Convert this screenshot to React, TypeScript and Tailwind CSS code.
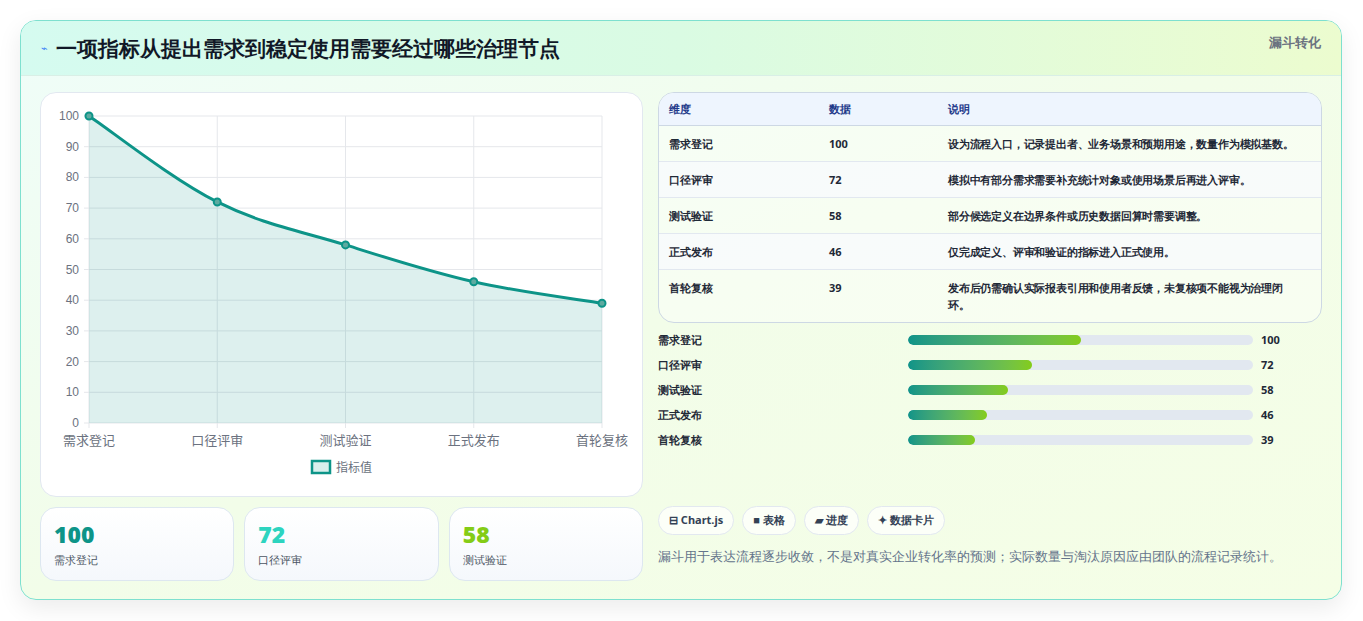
import React from "react";

const rows = [
  { name: "需求登记", v: 100, note: "设为流程入口，记录提出者、业务场景和预期用途，数量作为模拟基数。" },
  { name: "口径评审", v: 72, note: "模拟中有部分需求需要补充统计对象或使用场景后再进入评审。" },
  { name: "测试验证", v: 58, note: "部分候选定义在边界条件或历史数据回算时需要调整。" },
  { name: "正式发布", v: 46, note: "仅完成定义、评审和验证的指标进入正式使用。" },
  { name: "首轮复核", v: 39, note: "发布后仍需确认实际报表引用和使用者反馈，未复核项不能视为治理闭环。" },
];

const X0 = 48, X1 = 561, Y0 = 23, Y1 = 330;
const px = (i: number) => X0 + (i * (X1 - X0)) / 4;
const py = (v: number) => Y1 - (v / 100) * (Y1 - Y0);

function linePath() {
  const pts = rows.map((r, i) => [px(i), py(r.v)]);
  let d = `M${pts[0][0]},${pts[0][1]}`;
  const t = 0.35;
  for (let i = 0; i < pts.length - 1; i++) {
    const p0 = pts[i - 1] || pts[i];
    const p1 = pts[i];
    const p2 = pts[i + 1];
    const p3 = pts[i + 2] || p2;
    const c1 = [p1[0] + ((p2[0] - p0[0]) * t) / 2, p1[1] + ((p2[1] - p0[1]) * t) / 2];
    const c2 = [p2[0] - ((p3[0] - p1[0]) * t) / 2, p2[1] - ((p3[1] - p1[1]) * t) / 2];
    d += ` C${c1[0]},${c1[1]} ${c2[0]},${c2[1]} ${p2[0]},${p2[1]}`;
  }
  return d;
}

const Chart = () => {
  const d = linePath();
  return (
    <svg width="600" height="402" className="block">
      {Array.from({ length: 11 }).map((_, k) => (
        <g key={k}>
          <line x1={X0 - 5} x2={X1} y1={py(k * 10)} y2={py(k * 10)} stroke="#e5e7eb" />
          <text x={X0 - 10} y={py(k * 10) + 4} textAnchor="end" fontSize="12" fill="#6b7280" fontFamily="Liberation Sans, sans-serif">{k * 10}</text>
        </g>
      ))}
      {rows.map((r, i) => (
        <g key={r.name}>
          <line x1={px(i)} x2={px(i)} y1={Y0} y2={Y1 + 5} stroke="#e5e7eb" />
          <text x={px(i)} y={Y1 + 22} textAnchor="middle" fontSize="13" fill="#6b7280" fontFamily="Noto Sans CJK SC, sans-serif">{r.name}</text>
        </g>
      ))}
      <path d={`${d} L${X1},${Y1} L${X0},${Y1} Z`} fill="rgba(13,148,136,0.14)" />
      <path d={d} fill="none" stroke="#0d9488" strokeWidth="3" />
      {rows.map((r, i) => (
        <circle key={i} cx={px(i)} cy={py(r.v)} r="3.5" fill="#5eaaa0" stroke="#0d9488" strokeWidth="2" />
      ))}
      <rect x="271" y="368" width="18" height="12" fill="#d8efec" stroke="#0d9488" strokeWidth="2.5" />
      <text x="295" y="379" fontSize="12" fill="#6b7280" fontFamily="Noto Sans CJK SC, sans-serif">指标值</text>
    </svg>
  );
};

export default function App() {
  return (
    <div className="w-[1363px] h-[621px] bg-white p-5 pr-[21px] font-['Noto_Sans_CJK_SC',sans-serif]">
      <div className="h-[580px] rounded-2xl border border-[#7ee0cf] overflow-hidden shadow-[0_8px_24px_rgba(0,0,0,0.08)] bg-gradient-to-br from-[#effdf9] via-[#f2fde9] to-[#f5fee6] flex flex-col">
        <div className="h-[55px] shrink-0 flex items-center justify-between px-5 bg-gradient-to-r from-[#d5fbf0] via-[#dafbe3] to-[#ecfccf] border-b border-[#d9efe6]">
          <div className="flex items-center gap-2">
            <span className="text-[11px] text-[#3b82f6]">⌁</span>
            <h1 className="text-[20.5px] font-black text-[#111827]">一项指标从提出需求到稳定使用需要经过哪些治理节点</h1>
          </div>
          <span className="text-[13px] font-bold text-[#6b7280] self-start mt-3">漏斗转化</span>
        </div>
        <div className="flex gap-[15px] px-[19px] pt-4">
          <div className="w-[603px] shrink-0 flex flex-col gap-[10px]">
            <div className="h-[405px] rounded-2xl bg-white border border-[#e2e8f0]">
              <Chart />
            </div>
            <div className="grid grid-cols-3 gap-[10px]">
              {[["100", "text-[#0d9488]", "需求登记"], ["72", "text-[#2dd4bf]", "口径评审"], ["58", "text-[#84cc16]", "测试验证"]].map(([n, c, l]) => (
                <div key={l} className="h-[74px] rounded-2xl border border-[#dde7f0] bg-gradient-to-b from-white to-[#f5f8fc] px-[13px] pt-[12px]">
                  <div className={`text-[23px] font-black leading-7 ${c}`}>{n}</div>
                  <div className="text-[11px] text-[#4b5563] mt-1">{l}</div>
                </div>
              ))}
            </div>
          </div>
          <div className="flex-1 flex flex-col">
            <div className="rounded-2xl border border-[#cdd8e4] overflow-hidden bg-white/40">
              <div className="grid grid-cols-[160px_119px_1fr] h-[33px] items-center px-[10px] bg-[#eef5fe] border-b border-[#cdd8e4] text-[11px] font-bold text-[#1e3a8a]">
                <span>维度</span><span>数据</span><span>说明</span>
              </div>
              {rows.map((r, i) => (
                <div key={r.name} className={`grid grid-cols-[160px_119px_1fr] px-[10px] py-[9px] text-[11px] font-bold text-[#1f2937] leading-[17px] ${i % 2 === 1 ? "bg-[#f8fafc]/80" : ""} ${i < 4 ? "border-b border-[#e2e8f0]" : ""}`}>
                  <span>{r.name}</span><span>{r.v}</span><span className="pr-2 tracking-[-0.2px]">{r.note}</span>
                </div>
              ))}
            </div>
            <div className="flex flex-col gap-[9px] mt-[9px]">
              {rows.map((r) => (
                <div key={r.name} className="flex items-center h-4 text-[11px] font-bold text-[#1f2937]">
                  <span className="w-[250px]">{r.name}</span>
                  <div className="w-[345px] h-[10px] rounded-full bg-[#e2e8f0] overflow-hidden">
                    <div className="h-full rounded-full bg-gradient-to-r from-[#0d9488] to-[#84cc16]" style={{ width: `${r.v / 2}%` }} />
                  </div>
                  <span className="ml-[8px]">{r.v}</span>
                </div>
              ))}
            </div>
            <div className="flex gap-[8px] mt-[58px]">
              {["⊟ Chart.js", "■ 表格", "▰ 进度", "✦ 数据卡片"].map((c) => (
                <span key={c} className="h-[29px] px-[10px] rounded-full border border-[#e2e8f0] bg-white/70 text-[11px] font-bold text-[#334155] flex items-center">{c}</span>
              ))}
            </div>
            <p className="mt-[12px] text-[13px] text-[#64748b] font-medium">漏斗用于表达流程逐步收敛，不是对真实企业转化率的预测；实际数量与淘汰原因应由团队的流程记录统计。</p>
          </div>
        </div>
      </div>
    </div>
  );
}
